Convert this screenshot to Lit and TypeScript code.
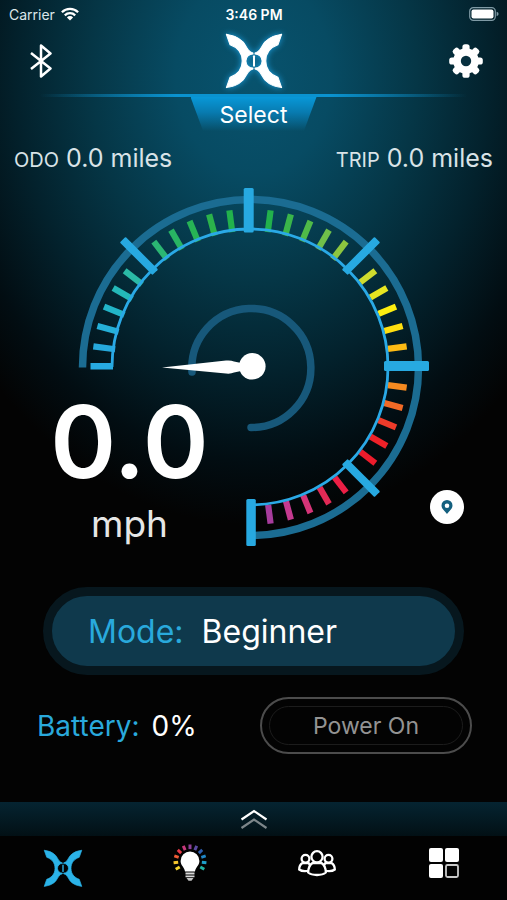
import { LitElement, html, css, svg } from "lit";
import { customElement, property } from "lit/decorators.js";

const CX = 250;
const CY = 367;

const TICK_COLORS: string[][] = [
  ["#26a9dc", "#25b0d8", "#22b5c8", "#24b8b8", "#2bbaa6"],
  ["#2bb673", "#28b463", "#27b355", "#2bb24b", "#22b14c"],
  ["#22b14c", "#3ab54a", "#4fba48", "#70c04a", "#8dc63f"],
  ["#cfdc2e", "#e8e621", "#fdee10", "#ffdf10", "#fdbb14"],
  ["#f58a20", "#f26a26", "#ef3b2a", "#ee2128", "#ed1c2c"],
  ["#ec1f45", "#e22a56", "#d63478", "#c53a90", "#a63c9c"],
];

/** Point on a circle round the dial centre; 0 degrees is straight up. */
function polar(angle: number, radius: number): [number, number] {
  const a = (angle * Math.PI) / 180;
  return [CX + radius * Math.sin(a), CY - radius * Math.cos(a)];
}

function spoke(angle: number, from: number, to: number, color: string, width: number) {
  const [x1, y1] = polar(angle, from);
  const [x2, y2] = polar(angle, to);
  return svg`<line x1=${x1} y1=${y1} x2=${x2} y2=${y2} stroke=${color} stroke-width=${width} />`;
}

@customElement("brand-mark")
class BrandMark extends LitElement {
  static styles = css`
    :host { display: block; }
    svg { display: block; width: 100%; height: auto; overflow: visible; }
  `;
  render() {
    const half = svg`<path d="M1 1C9 3 18 4 26 7C36 11 44 17 51 24C57 31 60 39 66 47C70 52 75 55 80 56L80 59A21 21 0 0 0 80 101L80 104C75 105 70 108 66 113C60 121 57 129 51 136C44 143 36 149 26 153C18 156 9 157 1 159L12 128C32 121 48 106 48 80C48 54 32 39 12 32Z" stroke="currentColor" stroke-width="3" stroke-linejoin="round"/>`;
    return html`<svg viewBox="0 0 166 160" fill="currentColor" aria-hidden="true">
      ${half}
      <g transform="translate(166 0) scale(-1 1)">${half}</g>
      <rect x="80" y="63" width="6" height="34" rx="3" />
    </svg>`;
  }
}

@customElement("speed-dial")
class SpeedDial extends LitElement {
  @property() speed = "0.0";
  @property() unit = "mph";

  static styles = css`
    :host { display: block; position: relative; width: min(420px, 100%); }
    .face { display: block; width: 100%; height: auto; }
    .readout {
      position: absolute; left: 4px; top: 208px; width: 164px;
      display: flex; flex-direction: column; align-items: center;
    }
    .speed { font-size: 100px; line-height: 100px; font-weight: 600; }
    .unit { font-size: 37px; line-height: 48px; margin-top: 8px; color: #e6e6e6; }
    .locate {
      position: absolute; right: 0; bottom: 28px; width: 34px; height: 34px;
      padding: 0; border: 0; border-radius: 50%; background: #fff;
      display: grid; place-items: center;
    }
    .locate svg { display: block; }
  `;

  render() {
    return html`
      <svg class="face" viewBox="44 184 420 368" role="img" aria-label="Speedometer">
        <path d="M82.5 367.5A168 168 0 1 1 251 535.5" fill="none" stroke="#1b6c92" stroke-width="7.5" />
        <path d="M192 372A59.5 59.5 0 1 1 251 427.5" fill="none" stroke="#17587a" stroke-width="7.5" stroke-linecap="round" />
        ${TICK_COLORS.map((group, g) =>
          group.map((color, i) => spoke(-90 + g * 45 + (i + 1) * 7.5, g < 3 ? 136 : 139, 158, color, 6.2)))}
        <path d="M112 367A138 138 0 1 1 250 505" fill="none" stroke="#2aa9e6" stroke-width="2.8" />
        <rect x="90.500" y="363" width="22.500" height="6.500" fill="#27aae1" />
        <g fill="#27a9e1">
          <rect x="243.700" y="188" width="10" height="44.500" rx="1.500" />
          <rect x="384" y="361" width="45" height="10" rx="1.500" />
          <rect x="246.300" y="499" width="9.500" height="47" rx="1.500" />
          <rect x="-4" y="-180" width="8" height="46" rx="1" transform="translate(250 367) rotate(-45)" />
          <rect x="-4" y="-180" width="8" height="46" rx="1" transform="translate(250 367) rotate(45)" />
          <rect x="-4" y="-180" width="8" height="46" rx="1" transform="translate(250 367) rotate(135)" />
        </g>
        <path d="M162 367.500L226 360.500Q231 360 234 361.500L246 364V370L234 372.500Q231 374 226 373.500Z" fill="#fff" />
        <circle cx="252.300" cy="366.300" r="13.300" fill="#fff" />
      </svg>
      <div class="readout">
        <span class="speed">${this.speed}</span>
        <span class="unit">${this.unit}</span>
      </div>
      <button class="locate" aria-label="Show location">
        <svg width="12" height="14" viewBox="0 0 12 14">
          <path fill="#14607f" fill-rule="evenodd" d="M6 0A5.500 5.500 0 0 1 11.500 5.500C11.500 9 8 11 6 14C4 11 .5 9 .5 5.500A5.500 5.500 0 0 1 6 0ZM6 3.400A2.300 2.300 0 1 0 6 8A2.300 2.300 0 1 0 6 3.400Z" />
        </svg>
      </button>
    `;
  }
}

@customElement("app-root")
class AppRoot extends LitElement {
  static styles = css`
    :host {
      display: flex; flex-direction: column; min-height: 100vh; box-sizing: border-box;
      color: #fff; font-family: Inter, "Liberation Sans", sans-serif;
      background: radial-gradient(ellipse 70% 450px at 50% 75px,
        #08536e 0%, #074b63 22%, #053646 46%, #03222d 66%, #020d12 86%, #030303 100%) #030303;
    }
    button { font: inherit; color: inherit; margin: 0; }
    svg { display: block; }

    .status {
      display: grid; grid-template-columns: 1fr auto 1fr; align-items: center;
      height: 28px; padding: 0 8px 0 9px; font-size: 14px;
    }
    .carrier { display: flex; align-items: center; gap: 6px; color: #dbe6ea; }
    .clock { font-weight: 600; font-size: 14px; }
    .status .cell { justify-self: end; }

    .top {
      display: flex; justify-content: space-between; align-items: center;
      height: 66px; padding: 0 22px; box-sizing: border-box;
    }
    .icon { background: none; border: 0; padding: 0; width: 38px; height: 38px; display: grid; place-items: center; }
    .logo { width: 56px; filter: drop-shadow(0 0 3px #1c9fdf); }
    .rule { height: 3px; margin: 0 40px; background: linear-gradient(90deg, #0a93d000, #0a93d0 32%, #0a93d0 68%, #0a93d000); }
    .select {
      align-self: center; width: 126px; height: 34px; padding: 0; border: 0;
      font-size: 23px; line-height: 36px;
      background: linear-gradient(#0898d8, #087bb0 45%, #08536e00);
      clip-path: polygon(0 0, 100% 0, 90% 100%, 10% 100%);
    }

    .trips { display: flex; justify-content: space-between; padding: 0 14px; margin: 11px 0 8px; color: #d9e3e7; }
    .trip { display: flex; align-items: baseline; gap: 7px; font-size: 25px; line-height: 32px; }
    .trip small { font-size: 20px; }

    speed-dial { align-self: center; }

    .mode {
      display: flex; align-items: center; gap: 18px; height: 88px; margin: 35px 43px 0;
      padding: 0 36px; border: 9px solid #07171e; border-radius: 44px;
      background: #0f394c; font-size: 32px; box-sizing: border-box;
    }
    .accent { color: #29a9dc; }
    .power-row { display: flex; justify-content: space-between; align-items: center; margin: 22px 35px 40px 37px; }
    .charge { display: flex; gap: 12px; font-size: 28px; }
    .power {
      width: 212px; height: 57px; padding: 7px; border: 2px solid #4c4c4c; border-radius: 29px;
      background: none; color: #939393; font-size: 23px;
    }
    .power span { display: grid; place-items: center; height: 100%; box-sizing: border-box; border: 1px solid #1c1c1c; border-radius: 20px; }

    .tray {
      display: grid; place-items: center; height: 34px; margin-top: auto; padding: 0; border: 0;
      background: linear-gradient(#052431, #021015);
    }
    .tabs { display: grid; grid-template-columns: repeat(4, 1fr); height: 64px; background: #020202; }
    .tabs a { display: grid; place-items: center; padding-bottom: 10px; color: #fff; }
    .tabs .current { color: #2bb3e8; padding-bottom: 0; }
    .tabs brand-mark { width: 38px; }
  `;

  render() {
    const rays = ["#f6d52f", "#f5c52c", "#ef5b35", "#e63946", "#c8387c", "#8d3f97", "#5a4ba0", "#2f5fb0", "#1f86c8", "#1d9fc9", "#22b3a4"];
    return html`
      <div class="status">
        <span class="carrier">Carrier
          <svg width="18" height="14" viewBox="0 0 18 14" fill="none" stroke="#fff" stroke-width="2.300">
            <path d="M.9 5.200A11.600 11.600 0 0 1 17.100 5.200" />
            <path d="M3.800 8.300A7.500 7.500 0 0 1 14.200 8.300" />
            <path d="M9 13.600L5.900 10.400A4.400 4.400 0 0 1 12.100 10.400Z" fill="#fff" stroke="none" />
          </svg>
        </span>
        <span class="clock">3:46 PM</span>
        <svg class="cell" width="30" height="14" viewBox="0 0 30 14">
          <rect x=".7" y=".7" width="25.600" height="12.600" rx="3.600" fill="none" stroke="#7f9aa5" stroke-width="1.200" />
          <rect x="2.500" y="2.500" width="22" height="9" rx="2" fill="#fff" />
          <path d="M27.600 4.800Q29.600 5.400 29.600 7T27.600 9.200Z" fill="#7f9aa5" />
        </svg>
      </div>

      <header class="top">
        <button class="icon" aria-label="Bluetooth">
          <svg width="22" height="34" viewBox="0 0 22 34" fill="none" stroke="#fff" stroke-width="2.500" stroke-linejoin="round">
            <path d="M1 9L20.500 24.500L11 32.500V1.500L20.500 9.500L1 25" />
          </svg>
        </button>
        <brand-mark class="logo"></brand-mark>
        <button class="icon" aria-label="Settings">
          <svg width="34" height="34" viewBox="-17 -17 34 34">
            <g fill="#fff">
              ${[0, 45, 90, 135].map((a) => svg`<rect x="-3.600" y="-16.800" width="7.200" height="33.600" rx="2.600" transform="rotate(${a})" />`)}
              <circle r="12.800" />
            </g>
            <circle r="5.200" fill="#07303f" />
          </svg>
        </button>
      </header>
      <div class="rule"></div>
      <button class="select">Select</button>

      <div class="trips">
        <span class="trip"><small>ODO</small>0.0 miles</span>
        <span class="trip"><small>TRIP</small>0.0 miles</span>
      </div>

      <speed-dial></speed-dial>

      <button class="mode"><span class="accent">Mode:</span><span>Beginner</span></button>

      <div class="power-row">
        <div class="charge"><span class="accent">Battery:</span><span>0%</span></div>
        <button class="power"><span>Power On</span></button>
      </div>

      <button class="tray" aria-label="Expand panel">
        <svg width="28" height="20" viewBox="0 0 28 20" fill="none" stroke-width="2.200">
          <path d="M1.500 10.500L14 2L26.500 10.500" stroke="#fff" />
          <path d="M1.500 19L14 10.500L26.500 19" stroke="#7d868a" />
        </svg>
      </button>
      <nav class="tabs">
        <a class="current" href="#ride" aria-label="Ride"><brand-mark></brand-mark></a>
        <a href="#lights" aria-label="Lights">
          <svg width="34" height="38" viewBox="-17 -17 34 38">
            ${rays.map((c, i) => svg`<rect x="-1.500" y="-16.500" width="3" height="4.600" fill=${c} transform="rotate(${-120 + i * 24})" />`)}
            <path fill="#fff" d="M0-9.500A9.400 9.400 0 0 1 9.400-.1C9.400 4.500 5.500 6 5 10.500H-5C-5.500 6-9.400 4.500-9.400-.1A9.400 9.400 0 0 1 0-9.500Z" />
            <path d="M-4.500 12.500H4.500M-4.500 15.300H4.500" stroke="#d8d8d8" stroke-width="1.800" />
            <path d="M-3.500 17H3.500L1.500 19.800H-1.500Z" fill="#c4c4c4" />
          </svg>
        </a>
        <a href="#groups" aria-label="Groups">
          <svg width="38" height="28" viewBox="0 0 38 28" fill="#020202" stroke="#fff" stroke-width="2.300">
            <path d="M4.500 14C2 15.500 1.200 17.500 1.200 20.500C3.500 22.300 8.500 22.300 12 21.500V16L10.500 14Z" />
            <path d="M33.500 14C36 15.500 36.800 17.500 36.800 20.500C34.500 22.300 29.500 22.300 26 21.500V16L27.500 14Z" />
            <circle cx="7.500" cy="9.800" r="3.900" /><circle cx="30.500" cy="9.800" r="3.900" />
            <path d="M14.500 14C11.500 16 10.200 19.500 10.200 23.500C14 26.800 24 26.800 27.800 23.500C27.800 19.500 26.500 16 23.500 14Z" />
            <circle cx="19" cy="7.800" r="5.600" />
          </svg>
        </a>
        <a href="#more" aria-label="More">
          <svg width="32" height="32" viewBox="0 0 32 32" fill="#fff">
            <rect x="1" y="1" width="14" height="14" rx="2" />
            <rect x="17" y="1" width="14" height="14" rx="2" />
            <rect x="1" y="17" width="14" height="14" rx="2" />
            <rect x="18" y="18" width="12" height="12" rx="1.500" fill="none" stroke="#c9c9c9" stroke-width="1.800" />
          </svg>
        </a>
      </nav>
    `;
  }
}
